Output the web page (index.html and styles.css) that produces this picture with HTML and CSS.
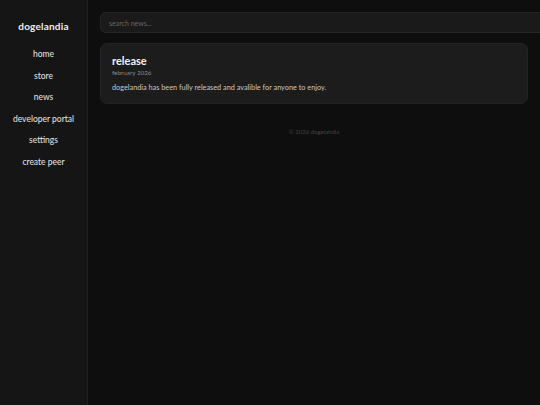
FILE: index.html
```html
<!DOCTYPE html>
<html>
<head>
<meta charset="utf-8">
<link rel="stylesheet" href="styles.css">
</head>
<body>
<div class="app">
  <aside class="sidebar">
    <div class="brand">dogelandia</div>
    <nav class="nav">
      <a class="nav-item">home</a>
      <a class="nav-item">store</a>
      <a class="nav-item">news</a>
      <a class="nav-item">developer portal</a>
      <a class="nav-item">settings</a>
      <a class="nav-item">create peer</a>
    </nav>
  </aside>
  <main class="main">
    <div class="search-wrap"><input class="search" type="text" placeholder="search news..."></div>
    <article class="card">
      <h2 class="card-title">release</h2>
      <div class="card-date">february 2026</div>
      <p class="card-body">dogelandia has been fully released and avalible for anyone to enjoy.</p>
    </article>
    <footer class="footer">© 2026 dogelandia</footer>
  </main>
</div>
</body>
</html>
```
FILE: styles.css
```css
html, body { margin: 0; padding: 0; height: 100%; }
body { background: #0e0e0e; font-family: "Lato", "Noto Sans", sans-serif; color: #e6e6e6; overflow: hidden; }
.app { display: flex; height: 405px; }
.sidebar { width: 88px; flex: none; background: #151515; border-right: 1px solid #202020; display: flex; flex-direction: column; align-items: center; padding-top: 19px; box-sizing: border-box; }
.brand { font-size: 10px; font-weight: 700; letter-spacing: 0.2px; color: #f0f0f0; height: 14px; line-height: 14px; }
.nav { display: flex; flex-direction: column; align-items: center; margin-top: 15px; gap: 0; }
.nav-item { font-size: 8.5px; color: #e8e8e8; height: 21.6px; line-height: 12px; text-decoration: none; }
.main { flex: 1; padding: 12px 12px 0 12px; min-width: 0; display: flex; flex-direction: column; }
.search-wrap { margin-right: -24px; }
.search { display: block; width: 100%; box-sizing: border-box; height: 21px; background: #1a1a1a; border: 1px solid #262626; border-radius: 6px; padding: 0 8px; font-family: inherit; font-size: 7px; color: #ccc; outline: none; }
.search::placeholder { color: #666; }
.card { margin-top: 10px; background: #1c1c1c; border: 1px solid #232323; border-radius: 7px; padding: 10px 11px 11px 11px; height: 61px; box-sizing: border-box; }
.card-title { margin: 0; font-size: 11px; font-weight: 700; color: #f2f2f2; line-height: 13px; }
.card-date { font-size: 6.3px; color: #8a8a8a; margin-top: 2px; line-height: 8px; }
.card-body { margin: 6px 0 0; font-size: 7.3px; color: #c8c8c8; line-height: 10px; }
.footer { text-align: center; font-size: 6px; color: #444; margin-top: 24px; }
```
